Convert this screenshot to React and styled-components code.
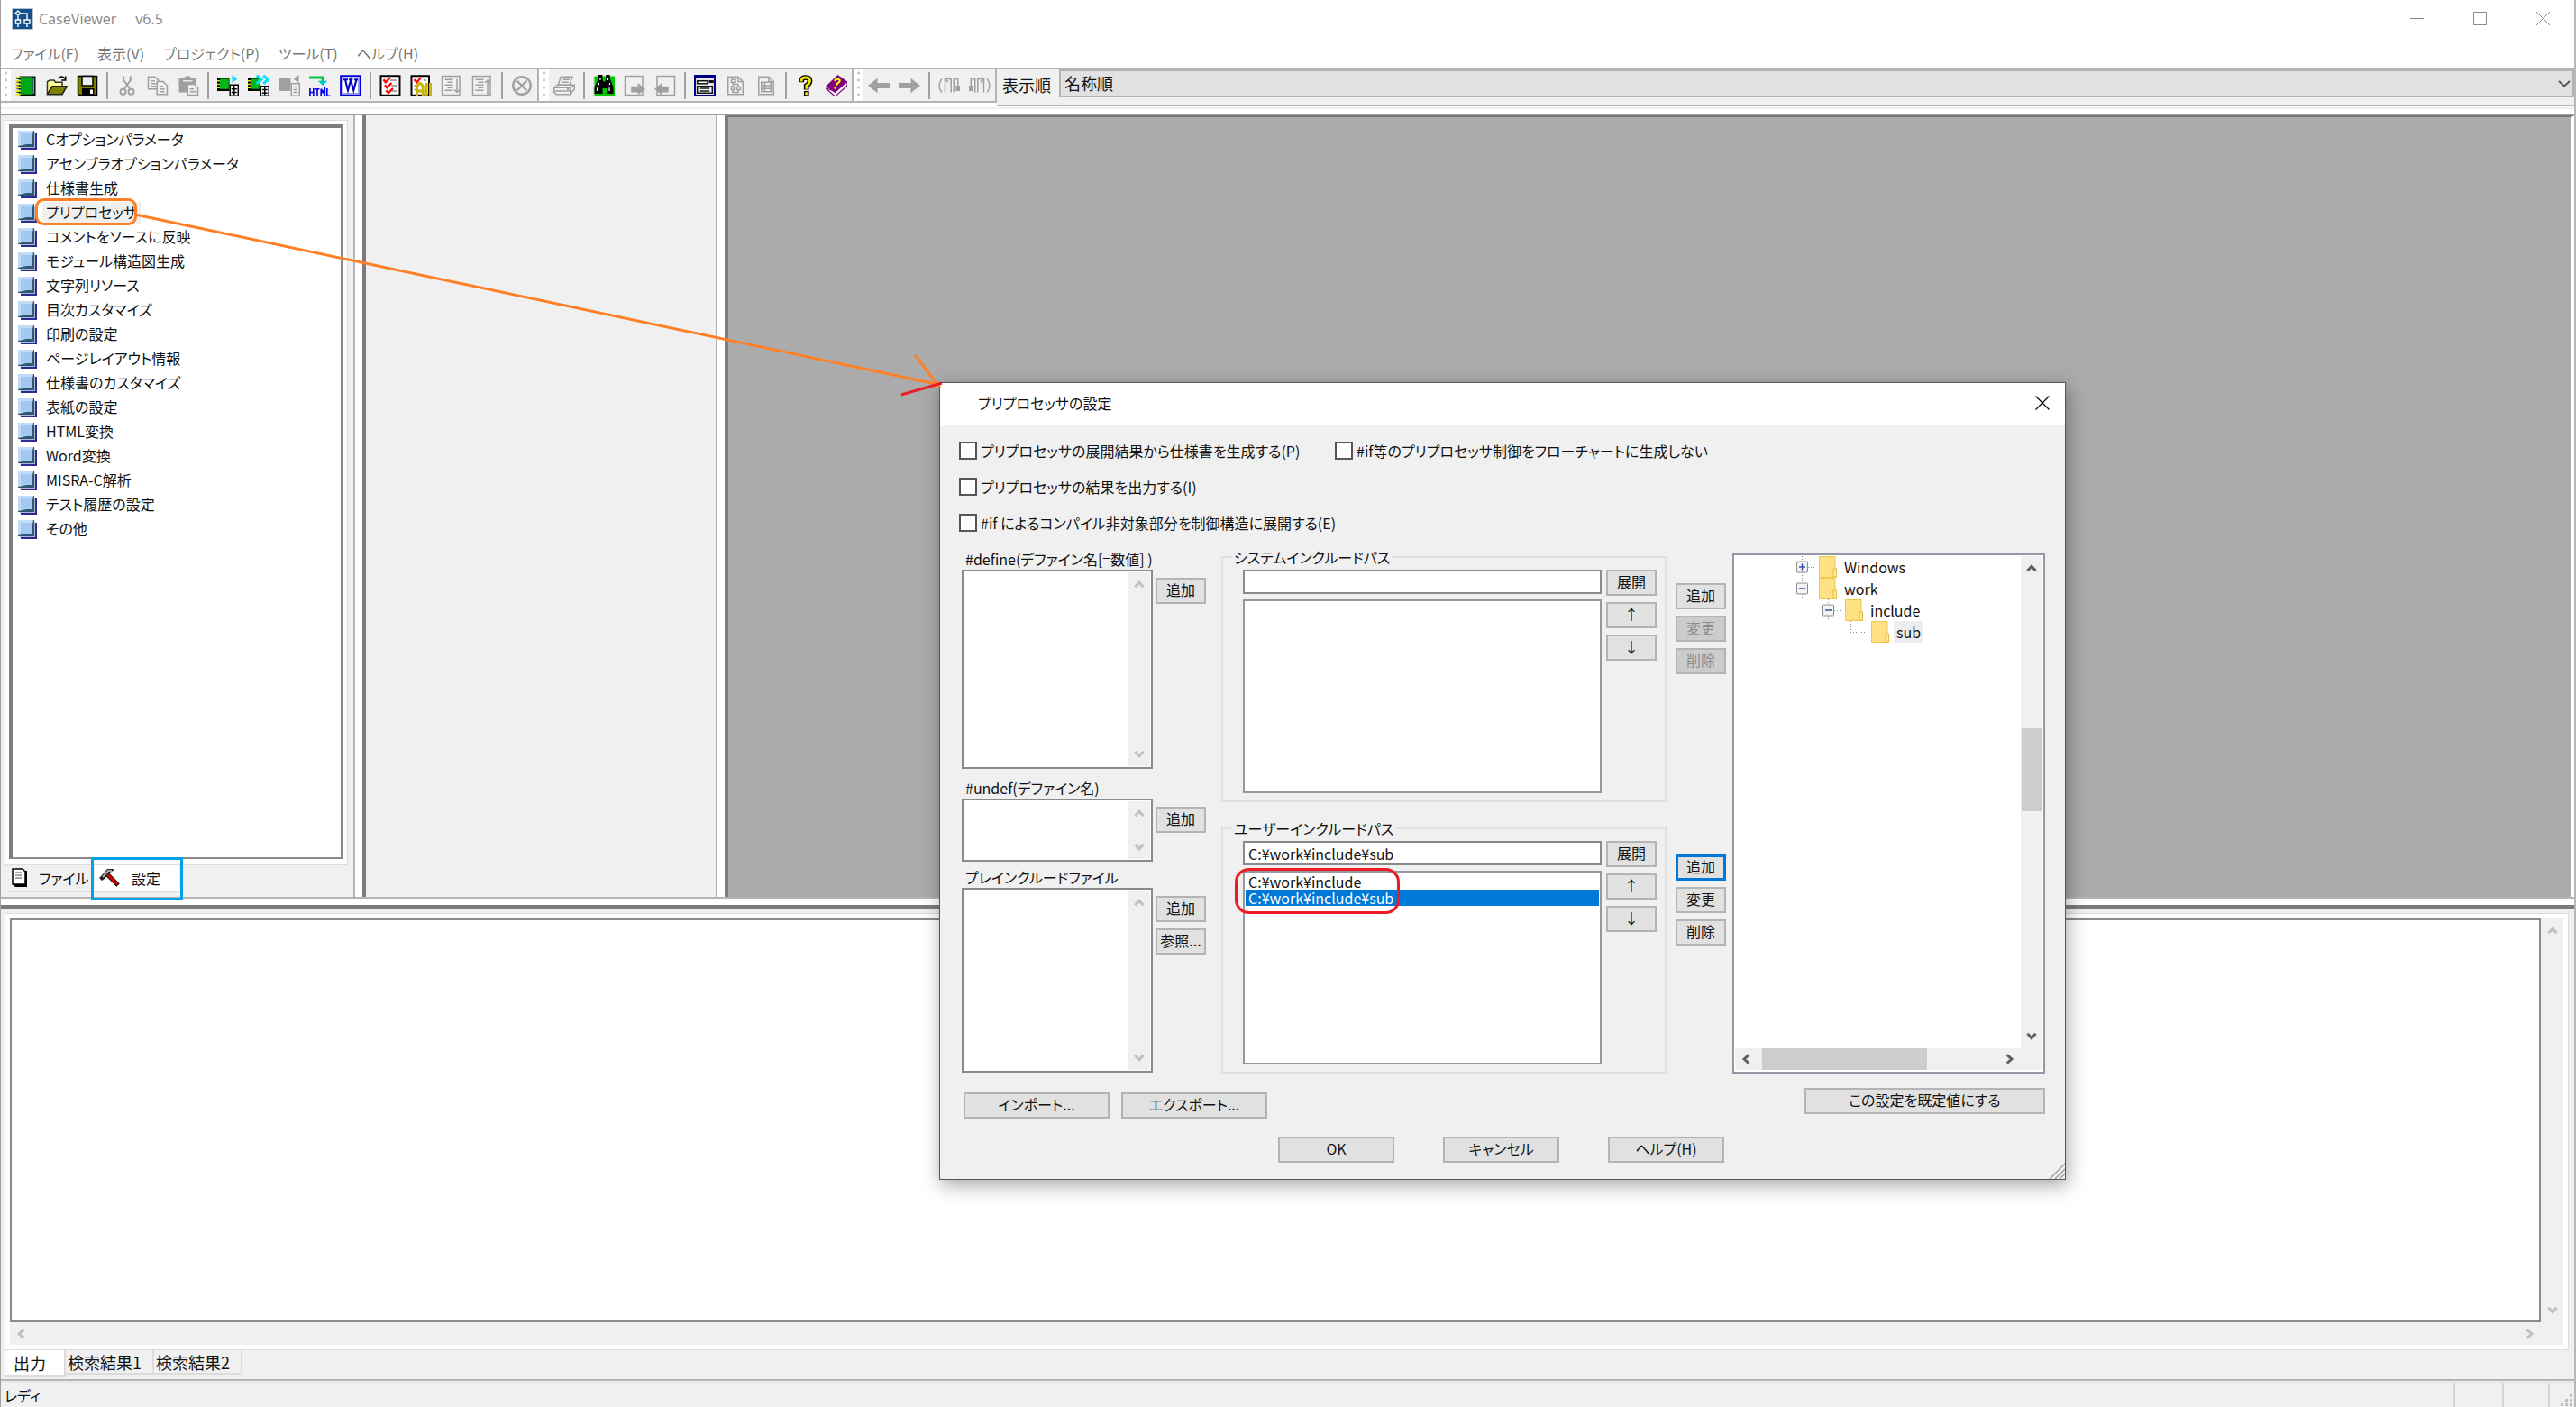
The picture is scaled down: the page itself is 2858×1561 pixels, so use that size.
import { useState } from 'react'
import styled, { createGlobalStyle, css } from 'styled-components'

const GlobalStyle = createGlobalStyle`
  * {
    box-sizing: border-box;
  }

  body {
    background: #f0f0f0;
    color: #111;
    font-family: 'Noto Sans CJK JP', 'Noto Sans', sans-serif;
    font-feature-settings: 'palt';
    font-size: 16px;
    line-height: 20px;
    margin: 0;
  }

  button, input, select, textarea {
    color: inherit;
    font: inherit;
    font-feature-settings: inherit;
  }

  ul {
    list-style: none;
    margin: 0;
    padding: 0;
  }
`

const Window = styled.div`
  border-left: 1px solid #a0a0a0;
  border-right: 2px solid #b8b8b8;
  display: flex;
  flex-direction: column;
  min-height: 100vh;
  overflow: hidden;
  position: relative;
`

const TitleBar = styled.header`
  align-items: center;
  background: #fff;
  color: #8c8c8c;
  display: flex;
  height: 42px;
  padding-left: 12px;
`

const AppName = styled.h1`
  flex: 1;
  font-family: 'Noto Sans', sans-serif;
  font-size: 16px;
  font-weight: 400;
  margin: 0;
  padding-left: 6px;
  white-space: pre;
`

const WindowButton = styled.button`
  background: none;
  border: 0;
  height: 42px;
  padding: 0;
  width: 70px;
`

const MenuBar = styled.nav`
  align-items: center;
  background: #fff;
  border-bottom: 2px solid #b4b4b4;
  display: flex;
  gap: 21px;
  height: 35px;
  padding-left: 11px;
`

const MenuButton = styled.button`
  background: none;
  border: 0;
  color: #777;
  padding: 0;
`

const Rebar = styled.div`
  align-items: flex-start;
  background: linear-gradient(#fff 42px, #f0f0f0 42px, #f0f0f0 44px, #fff 44px);
  border-bottom: 2px solid #9c9c9c;
  display: flex;
  height: 51px;
`

const Toolbar = styled.div`
  align-items: center;
  background: #f0f0f0;
  border-bottom: 2px solid #b4b4b4;
  border-right: 2px solid #b4b4b4;
  display: flex;
  height: 37px;
`

const Grip = styled.span`
  align-self: stretch;
  background: radial-gradient(circle, #c4c4c4 1px, #fff 2px) 3px 0 / 5px 8px repeat-y #fff;
  width: 11px;
`

const ToolButton = styled.button`
  align-items: center;
  background: none;
  border: 0;
  display: flex;
  height: 34px;
  justify-content: center;
  padding: 0;
  width: 34px;
`

const Separator = styled.span`
  background: #a0a0a0;
  height: 30px;
  margin: 0 4px;
  width: 2px;
`

const SortBar = styled.div`
  align-items: flex-start;
  background: #f0f0f0;
  border-bottom: 2px solid #b4b4b4;
  display: flex;
  flex: 1;
  font-size: 18px;
  height: 41px;

  label {
    padding: 7px 9px 0 6px;
  }
`

const SelectWrap = styled.div`
  flex: 1;
  position: relative;

  svg {
    position: absolute;
    right: 4px;
    top: 12px;
  }
`

const SortSelect = styled.select`
  appearance: none;
  background: #e1e1e1;
  border: 2px solid #b4b4b4;
  border-radius: 0;
  display: block;
  height: 31px;
  padding: 0 4px 2px;
  width: 100%;
`

const Workspace = styled.main`
  display: flex;
  flex: 1;
`

const SidePane = styled.section`
  border-right: 2px solid #b4b4b4;
  display: flex;
  flex-direction: column;
  padding: 5px 6px 0 4px;
  width: 393px;
`

const Splitter = styled.div`
  background: #fff;
  border-right: 4px solid #7c7c7c;
  width: 12px;
`

const BlankPane = styled.section`
  border-right: 2px solid #b4b4b4;
  width: 390px;
`

const Canvas = styled.section`
  background: #ababab;
  border-right: 3px solid #fff;
  border-top: 2px solid #777;
  flex: 1;
`

const TreeFrame = styled.div`
  background: #fff;
  border: 1px solid #dcdcdc;
  flex: 1;
  padding: 4px 5px 6px 4px;
`

const SettingList = styled.ul`
  border: 2px solid #8a8a8a;
  border-left: 4px solid #7c7c7c;
  border-top: 4px solid #7c7c7c;
  height: 100%;
  padding: 0 0 0 6px;
`

const SettingItem = styled.li`
  align-items: center;
  display: flex;
  gap: 6px;
  height: 27px;

  button {
    background: ${({ $active }) => ($active ? '#f0f0f0' : 'none')};
    border: 0;
    line-height: 22px;
    padding: 0 4px 3px;
  }
`

const SideTabs = styled.div`
  align-items: flex-start;
  display: flex;
  height: 35px;
  padding-left: 3px;
`

const SideTab = styled.button`
  align-items: center;
  background: ${({ $active }) => ($active ? '#fff' : 'none')};
  border: 0;
  border-bottom: 2px solid #dcdcdc;
  display: flex;
  gap: 12px;
  height: 30px;
  padding: 0 5px;
  white-space: nowrap;
  width: ${({ $active }) => ($active ? 94 : 97)}px;
`

const RowSplitter = styled.div`
  background: #fff;
  border-bottom: 4px solid #7c7c7c;
  border-top: 2px solid #b4b4b4;
  height: 13px;
`

const OutputPane = styled.section`
  border-bottom: 2px solid #b4b4b4;
  display: flex;
  flex-direction: column;
  height: 524px;
  padding: 5px 6px 2px 4px;
`

const OutputFrame = styled.div`
  background: #fff;
  border: 1px solid #dcdcdc;
  display: grid;
  flex: 1;
  grid-template-columns: 1fr 25px;
  grid-template-rows: 1fr 25px;
  padding: 5px;
`

const OutputText = styled.textarea`
  background: #fff;
  border: 2px solid #8a8a8a;
  display: block;
  height: 100%;
  resize: none;
  width: 100%;
`

const OutputTabs = styled.div`
  align-items: flex-start;
  display: flex;
  font-size: 18px;
  height: 30px;
`

const OutputTab = styled.button`
  background: ${({ $active }) => ($active ? '#fff' : '#f0f0f0')};
  border: 0;
  border-bottom: 2px solid #dcdcdc;
  border-right: 2px solid #dcdcdc;
  height: ${({ $active }) => ($active ? 30 : 27)}px;
  min-width: 68px;
  padding: 0 12px 0 2px;

  &:first-child {
    padding-left: 0;
    padding-right: 10px;
  }
`

const StatusBar = styled.footer`
  align-items: center;
  border-top: 1px solid #e0e0e0;
  display: flex;
  height: 28px;
  margin-top: 1px;
  padding-left: 4px;
`

const StatusText = styled.span`
  flex: 1;
`

const StatusCell = styled.span`
  align-items: flex-end;
  align-self: stretch;
  border-left: 2px solid #d7d7d7;
  display: flex;
  justify-content: flex-end;
  padding: 0 2px 1px 0;
  width: ${({ $width }) => $width}px;
`

const Strip = styled.div`
  align-items: center;
  background: #f0f0f0;
  color: ${({ $live }) => ($live ? '#606060' : '#bfbfbf')};
  display: flex;
  flex-direction: ${({ $row }) => ($row ? 'row' : 'column')};
  justify-content: space-between;
  padding: ${({ $row }) => ($row ? '0 5px' : '6px 0')};
`

const Thumb = styled.span`
  background: #cdcdcd;

  ${({ $row }) =>
    $row
      ? css`
          align-self: stretch;
          margin: 0 auto 0 9px;
          width: 183px;
        `
      : css`
          height: 92px;
          margin-bottom: 72px;
          width: 23px;
        `}
`

const Dialog = styled.section`
  background: #f0f0f0;
  border: 1px solid #555;
  box-shadow: 2px 6px 20px rgba(0, 0, 0, 0.35);
  left: 1041px;
  position: absolute;
  top: 424px;
  width: 1250px;
`

const DialogTitle = styled.header`
  align-items: center;
  background: #fff;
  display: flex;
  height: 46px;
  justify-content: space-between;
  padding: 0 17px 2px 42px;

  h2 {
    font-size: 16px;
    font-weight: 400;
    margin: 0;
  }

  button {
    background: none;
    border: 0;
    display: flex;
    padding: 0;
  }
`

const DialogBody = styled.form`
  padding: 19px 22px 18px 21px;
`

const Options = styled.div`
  display: flex;
  flex-direction: column;
  gap: 20px;
`

const OptionRow = styled.div`
  display: grid;
  grid-template-columns: 417px 1fr;
`

const Option = styled.label`
  align-items: center;
  display: flex;
  gap: 4px;
  height: 20px;
  white-space: nowrap;

  input {
    appearance: none;
    background: #fff;
    border: 2px solid #555;
    height: 20px;
    margin: 0;
    width: 20px;
  }
`

const Panels = styled.div`
  align-items: stretch;
  display: flex;
  margin: 18px 0 16px 3px;
`

const FieldColumn = styled.div`
  width: 271px;
`

const Field = styled.div`
  display: flex;
  gap: 3px;
  margin-bottom: ${({ $gap }) => $gap || 0}px;

  > div:first-child {
    width: 213px;
  }
`

const FieldLabel = styled.label`
  display: block;
  height: 24px;
  line-height: 24px;
  padding-left: 4px;
  white-space: nowrap;
`

const EditBox = styled.div`
  background: #fff;
  border: 2px solid #8a8a8a;
  display: grid;
  grid-template-columns: 1fr 24px;
  height: ${({ $height }) => $height}px;
  padding: 1px;

  textarea {
    background: none;
    border: 0;
    min-width: 0;
    resize: none;
  }
`

const FieldButtons = styled.div`
  display: flex;
  flex-direction: column;
  gap: 7px;
  padding-top: 33px;
`

const Button = styled.button`
  background: ${({ disabled }) => (disabled ? '#ccc' : '#e1e1e1')};
  border: ${({ $focus }) => ($focus ? '3px solid #0078d7' : '2px solid #b4b4b4')};
  color: ${({ disabled }) => (disabled ? '#8c8c8c' : '#111')};
  flex: none;
  height: 29px;
  line-height: 20px;
  padding: 0 0 3px;
  white-space: nowrap;
  width: ${({ $width }) => $width || 56}px;
`

const PathColumn = styled.div`
  display: flex;
  flex-direction: column;
  gap: 19px;
  margin: 0 7px 0 17px;
`

const PathRow = styled.div`
  display: flex;
  gap: 10px;
  height: 282px;
`

const PathGroup = styled.fieldset`
  border: 2px solid #dfdfdf;
  display: flex;
  gap: 5px;
  margin: 0;
  min-width: 0;
  padding: 4px 9px 8px 22px;
  width: 494px;

  legend {
    margin-left: -13px;
    padding: 0 3px;
  }
`

const PathFields = styled.div`
  display: flex;
  flex: 1;
  flex-direction: column;
  gap: 6px;
  min-width: 0;
`

const PathInput = styled.input`
  background: #fff;
  border: 2px solid #8a8a8a;
  height: 27px;
  padding: 0 4px;
  width: 100%;
`

const PathList = styled.ul`
  background: #fff;
  border: 2px solid #9299a2;
  flex: 1;
  padding: 1px;
`

const PathItem = styled.li`
  background: ${({ $active }) => ($active ? '#0078d7' : 'none')};
  color: ${({ $active }) => ($active ? '#fff' : 'inherit')};
  line-height: 18px;
  padding: 0 3px;
`

const ButtonColumn = styled.div`
  display: flex;
  flex-direction: column;
  gap: 7px;
  padding-top: ${({ $top }) => $top || 0}px;
`

const FolderPane = styled.div`
  background: #fff;
  border: 2px solid #9299a2;
  display: grid;
  flex: 1;
  grid-template-columns: 1fr 24px;
  grid-template-rows: 1fr 24px;
  margin-top: 6px;
  padding: 1px 1px 2px;
`

const FolderTree = styled.ul`
  overflow: hidden;
`

const FolderItem = styled.li`
  align-items: center;
  display: flex;
  gap: 5px;
  height: 24px;
  padding-left: ${({ $level }) => 65 + $level * 29}px;

  svg + svg {
    margin-left: -1px;
  }

  span {
    background: ${({ $active }) => ($active ? '#eee' : 'none')};
    line-height: 24px;
    padding: 0 3px;
  }
`

const FooterTop = styled.div`
  align-items: flex-end;
  display: flex;
  gap: 13px;
  height: 34px;
  margin-left: 5px;

  button:last-child {
    align-self: flex-start;
    margin-left: auto;
  }
`

const FooterBottom = styled.div`
  display: flex;
  gap: 54px;
  justify-content: center;
  margin: 20px 2px 0 0;
`

const ResizeGrip = styled.svg`
  bottom: 0;
  position: absolute;
  right: 0;
`

const Marks = styled.svg`
  left: -1px;
  pointer-events: none;
  position: absolute;
  top: 0;
`

const MarkedTab = styled.div`
  position: relative;
`

const TabMark = styled.span`
  border: 3px solid #00a2e8;
  inset: -9px -4px;
  pointer-events: none;
  position: absolute;
`

const chevrons = {
  up: 'M3 9 L7 4.5 L11 9',
  down: 'M3 5 L7 9.5 L11 5',
  left: 'M9 3 L4.5 7 L9 11',
  right: 'M5 3 L9.5 7 L5 11'
}

const Chevron = ({ dir }) => (
  <svg width='16' height='16' viewBox='0 0 14 14' fill='none' stroke='currentColor' strokeWidth='2.6'>
    <path d={chevrons[dir]} />
  </svg>
)

const G = '#a0a0a0'

// drawn on a 16 unit grid, shown at 24px
const icons = {
  notebook: (
    <>
      <path d='M3 1H15V16H3Z' fill='#000' />
      <path d='M3 1.5H13V14.5H3Z' fill='#00a818' />
      <path d='M13.6 2V14' stroke='#5a9aa8' />
      <path d='M0 2H4M0 4.5H4M0 7H4M0 9.5H4M0 12H4M0 14.5H4' stroke='#e6e600' />
      <path d='M1 3H4M1 5.5H4M1 8H4M1 10.5H4M1 13H4' stroke='#000' strokeWidth='.6' />
    </>
  ),
  open: (
    <>
      <path d='M1 14V5L3 4H6L7 5.5H12V8' fill='#ffff90' stroke='#333' />
      <path d='M1 14.5L4.5 8.5H15.5L12 14.5Z' fill='#808000' stroke='#222' />
      <path d='M9 2.5Q12 0 14 3M14.5 1V4H11.5' fill='none' stroke='#000' />
    </>
  ),
  save: (
    <>
      <path d='M1 1H15V15H2L1 14Z' fill='#808000' stroke='#000' />
      <path d='M4 1H12V8H4Z' fill='#f0f0f0' stroke='#000' />
      <path d='M4 10H13V15H4Z' fill='#000' />
      <path d='M10 11H12V14H10Z' fill='#fff' />
    </>
  ),
  cut: (
    <g fill='none' stroke={G} strokeWidth='1.3'>
      <path d='M5.5 1V4L10.5 11M10.5 1V4L5.5 11' />
      <circle cx='5' cy='12.5' r='2' />
      <circle cx='11' cy='12.5' r='2' />
    </g>
  ),
  copy: (
    <g fill='#f0f0f0' stroke={G}>
      <path d='M1 1.5H6L8.5 4V10.5H1Z' />
      <path d='M3 4.5H6M3 6.5H7M3 8.5H7' />
      <path d='M7.5 5H12L15 8V14.5H7.5Z' />
      <path d='M9.5 8.5H12M9.5 10.5H13M9.5 12.5H13' />
    </g>
  ),
  paste: (
    <>
      <path d='M1 2.5H5L6 1H9L10 2.5H14V13H1Z' fill={G} />
      <path d='M4 4.5H11' stroke='#e8e8e8' />
      <path d='M7.5 7H12.5L15 9.5V15H7.5Z' fill='#f0f0f0' stroke={G} />
      <path d='M9 10.5H12M9 12.5H13.5' stroke={G} />
    </>
  ),
  generate: (
    <>
      <path d='M0 2H9V12H0Z' fill='#000' />
      <path d='M2 3H8.5V10.5H2Z' fill='#00b818' />
      <path d='M0 4.5H2M0 7H2M0 9.5H2' stroke='#e6e600' />
      <path d='M11 0L15 3L11 6Z' fill='#00e0ff' />
      <path d='M9.5 7.5H15.5V15.5H9.5Z' fill='#fff' stroke='#000' />
      <path d='M12.5 8V15M10.5 10.5H14.5M10.5 13H14.5' stroke='#000' />
    </>
  ),
  generateAll: (
    <>
      <path d='M0 2H9V12H0Z' fill='#000' />
      <path d='M2 3H8.5V10.5H2Z' fill='#00b818' />
      <path d='M0 4.5H2M0 7H2M0 9.5H2' stroke='#e6e600' />
      <path d='M6.5 0.5L10 3.5L6.5 6.5M11.5 0.5L15 3.5L11.5 6.5' fill='none' stroke='#00e0ff' strokeWidth='2' />
      <path d='M9.5 8.5H15.5V15.5H9.5Z' fill='#fff' stroke='#000' />
      <path d='M12.5 9V15M10.5 11H14.5M10.5 13.5H14.5' stroke='#000' />
    </>
  ),
  revert: (
    <>
      <path d='M0 2H9V12H0ZM15 0V6L11 3Z' fill={G} />
      <path d='M9.5 6.5H15.5V15.5H9.5Z' fill='#f0f0f0' stroke={G} />
      <path d='M11 9H14M11 11H14M11 13H14' stroke={G} />
    </>
  ),
  html: (
    <>
      <path d='M0 2H10V5' fill='none' stroke='#00c840' strokeWidth='2' />
      <path d='M6.5 4.5H13.5L10 8Z' fill='#00c8c8' />
      <path
        d='M.6 10V16M3.2 10V16M.6 13H3.2M4.4 10.5H7.6M6 10.5V16M8.8 16V10.5L10.1 13L11.5 10.5V16M13.2 10V15.5H15.6'
        fill='none'
        stroke='#0000f0'
        strokeWidth='1.1'
      />
    </>
  ),
  word: (
    <>
      <path d='M.8 .8H15.2V15.2H.8Z' fill='#fff' stroke='#0000d8' strokeWidth='1.4' />
      <path d='M14 2V14H2' fill='none' stroke='#8080e0' />
      <path
        d='M2.5 3.5H6M6.7 3.5H9.6M10.7 3.5H13.3M4 3.5L6 11.5L8.1 4L10.2 11.5L12.3 3.5'
        fill='none'
        stroke='#0000c8'
        strokeWidth='1.4'
      />
    </>
  ),
  check: (
    <>
      <path d='M1 .8H15V15.2H1Z' fill='#fff' stroke='#000' strokeWidth='1.3' />
      <path d='M8 4H13M9 8H13M9 12H13' stroke='#888' />
      <path d='M3 3.5L4.5 5.5L8 2M4 7.5L5.5 9.5L9 6M5 11.5L6.5 13.5L10 10' fill='none' stroke='#f00' strokeWidth='1.5' />
    </>
  ),
  checkAll: (
    <>
      <path d='M1 .8H14V15.2H1Z' fill='#fff' stroke='#000' strokeWidth='1.3' />
      <path d='M3 3.5L5 5.5L8 2' fill='none' stroke='#f00' strokeWidth='1.5' />
      <path d='M3 8H5M3 11H5M10 4H12' stroke='#888' />
      <path d='M5 16V8.5L6.5 6.5H8L9.5 8.5V16M5 12H9.5M12 6V16M15 6V16' fill='none' stroke='#c8b400' strokeWidth='2' />
    </>
  ),
  listDown: (
    <g fill='none' stroke={G}>
      <path d='M1 1H14V15H1Z' />
      <path d='M3 3.5H9M5 5.5H9M3 7.5H9M5 9.5H9M3 11.5H9M12 3V13M10 11L12 13L14 11' />
    </g>
  ),
  listUp: (
    <g fill='none' stroke={G}>
      <path d='M1 1H14V15H1Z' />
      <path d='M3 3.5H9M5 5.5H9M3 7.5H9M5 9.5H9M3 11.5H9M12 15V4M10 6L12 4L14 6' />
    </g>
  ),
  stop: (
    <g fill='none' stroke={G} strokeWidth='1.6'>
      <circle cx='8' cy='8' r='6.5' />
      <path d='M4.5 4.5L11.5 11.5M11.5 4.5L4.5 11.5' />
    </g>
  ),
  print: (
    <g fill='#f0f0f0' stroke={G}>
      <path d='M3.5 7.5L5.5 1.5H14L12 7.5Z' />
      <path d='M7 3.5H12M6.3 5.5H11.3' />
      <path d='M.5 9.5L3 7.5H15.5V10.5L12.5 14.5H2L.5 13Z' />
      <path d='M.5 9.5H12.5V14M12.5 9.5L15.5 7.5M1 12H12' />
      <path d='M10 10.8H11.5' strokeWidth='1.6' />
    </g>
  ),
  find: (
    <>
      <path d='M1 1H16V16H1Z' fill='#00c800' />
      <path d='M0 2V16H2' fill='none' stroke='#e6e600' />
      <path d='M4 0H7V3L7.5 5H9L9.5 3V0H12.5V3L15 9V14H10V10H7V14H1V9L4 3Z' fill='#000' />
      <path d='M3 9.5V12M12 9.5V12M5.3 2V4M11 2V4M4.3 6V7.5M12.3 6V7.5' stroke='#fff' strokeWidth='.8' />
    </>
  ),
  pageNext: (
    <>
      <path d='M1 1H14V15H1Z' fill='none' stroke={G} />
      <path d='M5.5 8.5H10.5V6L16 10.5L10.5 15V13H5.5Z' fill={G} />
    </>
  ),
  pagePrev: (
    <>
      <path d='M2 1H15V15H2Z' fill='none' stroke={G} />
      <path d='M10.5 8.5H5.5V6L0 10.5L5.5 15V13H10.5Z' fill={G} />
    </>
  ),
  form: (
    <>
      <path d='M.7 .7H15.3V15.3H.7Z' fill='#e8e8e8' stroke='#000080' strokeWidth='1.4' />
      <path d='M0 0H16V2.6H0Z' fill='#000080' />
      <path d='M2.5 4.5H10V6.5H2.5ZM11.5 4.5H14V5.5H11.5ZM2.5 8.5H13.5V13.5H2.5Z' fill='#fff' stroke='#111' />
      <path d='M4.5 10H11.5M4.5 12H11.5' stroke='#111' strokeWidth='.9' />
    </>
  ),
  flow: (
    <g fill='none' stroke={G}>
      <path d='M2.5 1.5H10L13.5 5V14.5H2.5Z' />
      <path d='M10 1.5V5H13.5M6 5V7H10V9M5 3.5H8V5.5H5ZM5 8.5H7V11H5ZM9 9H11.5V11H9ZM6 11V13H10V11' />
    </g>
  ),
  table: (
    <g fill='none' stroke={G}>
      <path d='M2.5 1.5H10L13.5 5V14.5H2.5Z' />
      <path d='M10 1.5V5H13.5M4.5 5.5H11.5V12.5H4.5ZM4.5 8H11.5M4.5 10.2H11.5M7 5.5V12.5' />
    </g>
  ),
  help: (
    <g fill='none'>
      <path d='M4.8 5.5V4Q5 2 8 2Q11 2 11 4.5Q11 6.5 8.5 8V11M8.5 12V15.5' stroke='#000' strokeWidth='3.8' />
      <path d='M4.8 5V4Q5 2 8 2Q11 2 11 4.5Q11 6.5 8.5 8V10.5M8.5 12.8V14.8' stroke='#f0e000' strokeWidth='1.9' />
    </g>
  ),
  manual: (
    <>
      <path d='M0 10L7 16L16 8V5L7 12Z' fill='#fff' stroke='#800080' strokeWidth='.8' />
      <path d='M0 8.5L9 0L16 5L7 13.5Z' fill='#800080' />
      <path d='M6.5 4.5Q8.5 2 10.5 4Q10.5 5.5 8 7V8M7 9.2L6.8 10.4' fill='none' stroke='#ff0' strokeWidth='1.4' />
    </>
  ),
  back: <path d='M7 2.5V6H16.5V10H7V13.5L0 8Z' fill={G} />,
  forward: <path d='M9 2.5V6H0V10H9V13.5L16 8Z' fill={G} />,
  bracketNext: (
    <g fill='none' stroke={G}>
      <path d='M2.5 3Q-1 8 2.5 13M5 13V3H9.5V13M7.5 5.5L5 3M11.5 13V3H14.5V8' />
      <path d='M13 8H16V12H13Z' fill={G} stroke='none' />
    </g>
  ),
  bracketPrev: (
    <g fill='none' stroke={G}>
      <path d='M13.5 3Q17 8 13.5 13M11 13V3H6.5V13M8.5 5.5L11 3M4.5 13V3H1.5V8' />
      <path d='M0 8H3V12H0Z' fill={G} stroke='none' />
    </g>
  )
}

const ToolIcon = ({ name }) => (
  <svg width='24' height='24' viewBox='0 0 16 16' aria-hidden='true'>
    {icons[name]}
  </svg>
)

const AppIcon = () => (
  <svg width='24' height='24' viewBox='0 0 24 24' aria-hidden='true'>
    <path d='M.5 .5H23.5V23.5H.5Z' fill='#14508c' stroke='#b8c4d0' />
    <path
      d='M7 3L10 6L7 8L4 6ZM10 6H17V13M7 8V13M4.5 13H9.5V17H4.5ZM14 13H20V17H14ZM7 17V21M17 17V21'
      fill='none'
      stroke='#fff'
      strokeWidth='1.4'
    />
  </svg>
)

const NodeIcon = () => (
  <svg width='21' height='21' viewBox='0 0 21 21' aria-hidden='true'>
    <path d='M3 3H21V21H3Z' fill='#2a2a98' />
    <path d='M2 2H19V19H2Z' fill='#b4b4d0' />
    <path d='M0 0H18V18H0Z' fill='#2c5a70' />
    <path d='M0 0H17L14 14L0 17Z' fill='#c0dcf8' />
    <path d='M3 3H15V15H3Z' fill='#a4c8f0' />
  </svg>
)

const FileIcon = () => (
  <svg width='18' height='22' viewBox='0 0 18 22' aria-hidden='true'>
    <path d='M3 3H17V21H4L1 18Z' fill='#000' />
    <path d='M1 1H12L15 4V18H1Z' fill='#fff' stroke='#000' strokeWidth='1.5' />
    <path d='M4 5H11M4 8H11M4 11H11' stroke='#888' strokeWidth='1.5' />
  </svg>
)

const HammerIcon = () => (
  <svg width='24' height='24' viewBox='0 0 24 24' aria-hidden='true'>
    <path d='M9 8L21 20' stroke='#111' strokeWidth='5' />
    <path d='M9 8L20 19' stroke='#d80000' strokeWidth='3' />
    <path d='M0 12L3 9L9 2H16L17 3L12 6L6 13L3 15Z' fill='#222' />
    <path d='M4 11L10 4H14' fill='none' stroke='#a8a8a8' strokeWidth='2' />
  </svg>
)

const FolderIcon = () => (
  <svg width='20' height='24' viewBox='0 0 20 24' aria-hidden='true'>
    <path d='M.5 .5H18V14H19.5V23.5H.5Z' fill='#ffe082' stroke='#efc94c' />
    <path d='M16 23V14H19.5V23Z' fill='#ffe9a0' stroke='#e8bc3c' />
  </svg>
)

// dotted connector lines and the expand box in front of a folder
const Branch = ({ open, leaf }) => (
  <svg width='24' height='24' viewBox='0 0 24 24' fill='none' aria-hidden='true'>
    {leaf ? (
      <path d='M5.5 0V12.5H23' stroke='#888' strokeDasharray='1 2' />
    ) : (
      <>
        <path d='M9.5 0V24M16 12.5H24' stroke='#888' strokeDasharray='1 2' />
        <rect x='3.5' y='6' width='12' height='12' rx='1' fill='#f4f4f4' stroke='#8c8c8c' />
        <path d={open ? 'M6 12H13' : 'M6 12H13M9.5 8.5V15.5'} stroke='#3050b0' strokeWidth='1.5' />
      </>
    )}
  </svg>
)

const toolbars = [
  [
    ['notebook', 'open', 'save'],
    ['cut', 'copy', 'paste'],
    ['generate', 'generateAll', 'revert', 'html', 'word'],
    ['check', 'checkAll', 'listDown', 'listUp'],
    ['stop']
  ],
  [['print'], ['find', 'pageNext', 'pagePrev'], ['form', 'flow', 'table'], ['help', 'manual']],
  [
    ['back', 'forward'],
    ['bracketNext', 'bracketPrev']
  ]
]

const settings = [
  'Cオプションパラメータ',
  'アセンブラオプションパラメータ',
  '仕様書生成',
  'プリプロセッサ',
  'コメントをソースに反映',
  'モジュール構造図生成',
  '文字列リソース',
  '目次カスタマイズ',
  '印刷の設定',
  'ページレイアウト情報',
  '仕様書のカスタマイズ',
  '表紙の設定',
  'HTML変換',
  'Word変換',
  'MISRA-C解析',
  'テスト履歴の設定',
  'その他'
]

const folders = [
  { name: 'Windows', level: 0 },
  { name: 'work', level: 0, open: true },
  { name: 'include', level: 1, open: true },
  { name: 'sub', level: 2, leaf: true }
]

const ToolGroup = ({ names, divided }) => (
  <>
    {divided && <Separator />}
    {names.map((name) => (
      <ToolButton key={name} aria-label={name}>
        <ToolIcon name={name} />
      </ToolButton>
    ))}
  </>
)

const ScrollStrip = () => (
  <Strip>
    <Chevron dir='up' />
    <Chevron dir='down' />
  </Strip>
)

const MultiField = ({ id, label, height, gap, buttons }) => (
  <Field $gap={gap}>
    <div>
      <FieldLabel htmlFor={id}>{label}</FieldLabel>
      <EditBox $height={height}>
        <textarea id={id} />
        <ScrollStrip />
      </EditBox>
    </div>
    <FieldButtons>
      {buttons.map((text) => (
        <Button key={text} type='button'>
          {text}
        </Button>
      ))}
    </FieldButtons>
  </Field>
)

const IncludePaths = ({ title, value, paths = [], editable }) => {
  const [text, setText] = useState(value)

  return (
    <PathRow>
      <PathGroup>
        <legend>{title}</legend>
        <PathFields>
          <PathInput aria-label={title} value={text} onChange={(e) => setText(e.target.value)} />
          <PathList role='listbox' aria-label={title}>
            {paths.map((path) => (
              <PathItem key={path} role='option' aria-selected={path === value} $active={path === value}>
                {path}
              </PathItem>
            ))}
          </PathList>
        </PathFields>
        <ButtonColumn>
          <Button type='button'>展開</Button>
          <Button type='button'>↑</Button>
          <Button type='button'>↓</Button>
        </ButtonColumn>
      </PathGroup>
      <ButtonColumn $top={39}>
        <Button type='button' $focus={editable}>
          追加
        </Button>
        <Button type='button' disabled={!editable}>
          変更
        </Button>
        <Button type='button' disabled={!editable}>
          削除
        </Button>
      </ButtonColumn>
    </PathRow>
  )
}

const PreprocessorDialog = () => (
  <Dialog role='dialog' aria-labelledby='dialog-title'>
    <DialogTitle>
      <h2 id='dialog-title'>プリプロセッサの設定</h2>
      <button type='button' aria-label='閉じる'>
        <svg width='16' height='16' viewBox='0 0 16 16' stroke='#000' strokeWidth='1.2'>
          <path d='M.5 .5L15.5 15.5M15.5 .5L.5 15.5' />
        </svg>
      </button>
    </DialogTitle>
    <DialogBody onSubmit={(e) => e.preventDefault()}>
      <Options>
        <OptionRow>
          <Option>
            <input type='checkbox' />
            プリプロセッサの展開結果から仕様書を生成する(P)
          </Option>
          <Option>
            <input type='checkbox' />
            #if等のプリプロセッサ制御をフローチャートに生成しない
          </Option>
        </OptionRow>
        <Option>
          <input type='checkbox' />
          プリプロセッサの結果を出力する(I)
        </Option>
        <Option>
          <input type='checkbox' />
          #if によるコンパイル非対象部分を制御構造に展開する(E)
        </Option>
      </Options>
      <Panels>
        <FieldColumn>
          <MultiField id='define' label='#define(デファイン名[=数値] )' height={221} gap={9} buttons={['追加']} />
          <MultiField id='undef' label='#undef(デファイン名)' height={70} gap={5} buttons={['追加']} />
          <MultiField id='preinclude' label='プレインクルードファイル' height={205} buttons={['追加', '参照...']} />
        </FieldColumn>
        <PathColumn>
          <IncludePaths title='システムインクルードパス' value='' />
          <IncludePaths
            title='ユーザーインクルードパス'
            value='C:¥work¥include¥sub'
            paths={['C:¥work¥include', 'C:¥work¥include¥sub']}
            editable
          />
        </PathColumn>
        <FolderPane>
          <FolderTree role='tree'>
            {folders.map(({ name, level, open, leaf }) => (
              <FolderItem key={name} role='treeitem' $level={level} $active={leaf}>
                <Branch open={open} leaf={leaf} />
                <FolderIcon />
                <span>{name}</span>
              </FolderItem>
            ))}
          </FolderTree>
          <Strip $live>
            <Chevron dir='up' />
            <Thumb />
            <Chevron dir='down' />
          </Strip>
          <Strip $live $row>
            <Chevron dir='left' />
            <Thumb $row />
            <Chevron dir='right' />
          </Strip>
          <Strip />
        </FolderPane>
      </Panels>
      <FooterTop>
        <Button type='button' $width={162}>
          インポート...
        </Button>
        <Button type='button' $width={162}>
          エクスポート...
        </Button>
        <Button type='button' $width={267}>
          この設定を既定値にする
        </Button>
      </FooterTop>
      <FooterBottom>
        <Button type='submit' $width={129}>
          OK
        </Button>
        <Button type='button' $width={129}>
          キャンセル
        </Button>
        <Button type='button' $width={129}>
          ヘルプ(H)
        </Button>
      </FooterBottom>
    </DialogBody>
    <ResizeGrip width='18' height='18' viewBox='0 0 18 18' stroke='#a0a0a0' strokeWidth='1.5'>
      <path d='M1 18L18 1M7 18L18 7M12 18L18 12' />
    </ResizeGrip>
  </Dialog>
)

const App = () => {
  const [current, setCurrent] = useState('プリプロセッサ')

  return (
    <>
      <GlobalStyle />
      <Window>
        <TitleBar>
          <AppIcon />
          <AppName>{'CaseViewer     v6.5'}</AppName>
          <WindowButton aria-label='最小化'>
            <svg width='15' height='15' stroke='#888'>
              <path d='M0 7.5H15' />
            </svg>
          </WindowButton>
          <WindowButton aria-label='最大化'>
            <svg width='15' height='15' stroke='#888' fill='none'>
              <path d='M.5 .5H14.5V14.5H.5Z' />
            </svg>
          </WindowButton>
          <WindowButton aria-label='閉じる'>
            <svg width='15' height='15' stroke='#888'>
              <path d='M0 0L15 15M15 0L0 15' />
            </svg>
          </WindowButton>
        </TitleBar>
        <MenuBar>
          {['ファイル(F)', '表示(V)', 'プロジェクト(P)', 'ツール(T)', 'ヘルプ(H)'].map((text) => (
            <MenuButton key={text}>{text}</MenuButton>
          ))}
        </MenuBar>
        <Rebar>
          {toolbars.map((groups, i) => (
            <Toolbar key={i}>
              <Grip />
              {groups.map((names, j) => (
                <ToolGroup key={names[0]} names={names} divided={j > 0} />
              ))}
            </Toolbar>
          ))}
          <SortBar>
            <label htmlFor='sort'>表示順</label>
            <SelectWrap>
              <SortSelect id='sort'>
                <option>名称順</option>
              </SortSelect>
              <svg width='14' height='8' viewBox='0 0 14 8' fill='none' stroke='#555' strokeWidth='2'>
                <path d='M1 1L7 6.5L13 1' />
              </svg>
            </SelectWrap>
          </SortBar>
        </Rebar>
        <Workspace>
          <SidePane>
            <TreeFrame>
              <SettingList>
                {settings.map((name) => (
                  <SettingItem key={name} $active={name === current}>
                    <NodeIcon />
                    <button onClick={() => setCurrent(name)}>{name}</button>
                  </SettingItem>
                ))}
              </SettingList>
            </TreeFrame>
            <SideTabs role='tablist'>
              <SideTab role='tab'>
                <FileIcon />
                ファイル
              </SideTab>
              <MarkedTab>
                <SideTab role='tab' aria-selected='true' $active>
                  <HammerIcon />
                  設定
                </SideTab>
                <TabMark />
              </MarkedTab>
            </SideTabs>
          </SidePane>
          <Splitter />
          <BlankPane />
          <Splitter />
          <Canvas />
        </Workspace>
        <RowSplitter />
        <OutputPane>
          <OutputFrame>
            <OutputText aria-label='出力' readOnly />
            <ScrollStrip />
            <Strip $row>
              <Chevron dir='left' />
              <Chevron dir='right' />
            </Strip>
            <Strip />
          </OutputFrame>
          <OutputTabs role='tablist'>
            <OutputTab role='tab' aria-selected='true' $active>
              出力
            </OutputTab>
            <OutputTab role='tab'>検索結果1</OutputTab>
            <OutputTab role='tab'>検索結果2</OutputTab>
          </OutputTabs>
        </OutputPane>
        <StatusBar>
          <StatusText>レディ</StatusText>
          <StatusCell $width={54} />
          <StatusCell $width={51} />
          <StatusCell $width={29}>
            <svg width='13' height='13' fill='#bfbfbf'>
              <path d='M10 0h3v3h-3zM5 5h3v3h-3zM10 5h3v3h-3zM0 10h3v3h-3zM5 10h3v3h-3zM10 10h3v3h-3z' />
            </svg>
          </StatusCell>
        </StatusBar>
        <PreprocessorDialog />
        <Marks width='1600' height='1040' fill='none' stroke='#ff7f27' strokeWidth='3'>
          <rect x='40.5' y='221.5' width='110' height='27' rx='8' />
          <path d='M150 238L1043 427M1015 394L1043 430' />
          <path d='M1000 438L1045 425' stroke='#ed1c24' />
          <rect x='1371.5' y='964.5' width='180' height='48' rx='14' stroke='#ed1c24' />
        </Marks>
      </Window>
    </>
  )
}

export default App
